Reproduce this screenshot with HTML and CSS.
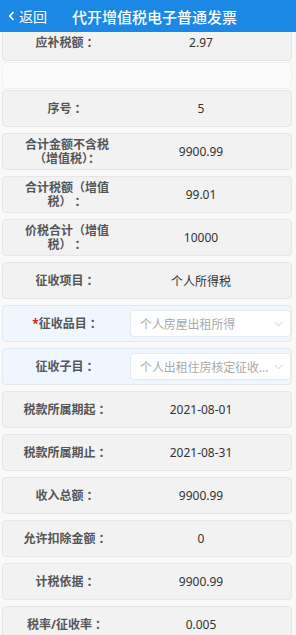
FILE: index.html
```html
<!DOCTYPE html>
<html lang="zh-CN">
<head>
  <meta charset="UTF-8">
  <meta name="viewport" content="width=device-width, initial-scale=1.0">
  <title>代开增值税电子普通发票</title>
  <link rel="stylesheet" href="styles.css">
</head>
<body>
  <div class="header">
    <div class="back">
      <svg class="back-icon" width="7" height="10" viewBox="0 0 7 10"><path d="M5.5 1 L1.8 5 L5.5 9" fill="none" stroke="#fff" stroke-width="1.8"/></svg>
      <span>返回</span>
    </div>
    <div class="title">代开增值税电子普通发票</div>
  </div>

  <div class="content">
    <div class="row first">
      <div class="label">应补税额 ：</div>
      <div class="value">2.97</div>
    </div>

    <div class="blank"></div>

    <div class="row">
      <div class="label">序号 ：</div>
      <div class="value">5</div>
    </div>
    <div class="row">
      <div class="label">合计金额不含税（增值税）：</div>
      <div class="value">9900.99</div>
    </div>
    <div class="row">
      <div class="label">合计税额（增值税） ：</div>
      <div class="value">99.01</div>
    </div>
    <div class="row">
      <div class="label">价税合计（增值税） ：</div>
      <div class="value">10000</div>
    </div>
    <div class="row">
      <div class="label">征收项目 ：</div>
      <div class="value">个人所得税</div>
    </div>

    <div class="row editable">
      <div class="label"><span class="required">*</span>征收品目 ：</div>
      <div class="value">
        <div class="select">
          <span class="select-text">个人房屋出租所得</span>
          <svg class="arrow" width="9" height="6" viewBox="0 0 9 6"><path d="M0.5 0.8 L4.5 4.8 L8.5 0.8" fill="none" stroke="#c8c8c8" stroke-width="0.9"/></svg>
        </div>
      </div>
    </div>
    <div class="row editable">
      <div class="label">征收子目 ：</div>
      <div class="value">
        <div class="select">
          <span class="select-text">个人出租住房核定征收...</span>
          <svg class="arrow" width="9" height="6" viewBox="0 0 9 6"><path d="M0.5 0.8 L4.5 4.8 L8.5 0.8" fill="none" stroke="#c8c8c8" stroke-width="0.9"/></svg>
        </div>
      </div>
    </div>

    <div class="row">
      <div class="label">税款所属期起 ：</div>
      <div class="value">2021-08-01</div>
    </div>
    <div class="row">
      <div class="label">税款所属期止 ：</div>
      <div class="value">2021-08-31</div>
    </div>
    <div class="row">
      <div class="label">收入总额 ：</div>
      <div class="value">9900.99</div>
    </div>
    <div class="row">
      <div class="label">允许扣除金额 ：</div>
      <div class="value">0</div>
    </div>
    <div class="row">
      <div class="label">计税依据 ：</div>
      <div class="value">9900.99</div>
    </div>
    <div class="row">
      <div class="label">税率/征收率 ：</div>
      <div class="value">0.005</div>
    </div>
  </div>
</body>
</html>
```

FILE: styles.css
```css
body {
  margin: 0;
  background-color: #f9f9f9;
  font-family: "Noto Sans", "Noto Sans CJK SC", sans-serif;
  font-size: 12px;
  color: #333;
}

.header {
  position: fixed;
  top: 0;
  left: 0;
  right: 0;
  height: 32px;
  background-color: #1c88e5;
  color: white;
  display: flex;
  align-items: center;
  z-index: 10;
}

.back {
  display: flex;
  align-items: center;
  padding-left: 8px;
  font-size: 14px;
}

.back-icon {
  margin-right: 4px;
}

.title {
  margin-left: 25px;
  font-size: 15px;
  font-weight: 500;
}

.content {
  padding-top: 24px;
}

.row {
  box-sizing: border-box;
  height: 37px;
  margin: 0 4px 6px 2px;
  background-color: #f2f2f2;
  border: 1px solid #e6e6e6;
  border-radius: 4px;
  display: flex;
  align-items: center;
}

.row.first {
  margin-bottom: 1px;
}

.row.editable {
  background-color: #eff6fd;
  border-color: #e3e9f0;
}

.blank {
  box-sizing: border-box;
  height: 27px;
  margin: 0 4px 1px 2px;
  background-color: #fbfbfb;
  border: 1px solid #f1f1f1;
  border-radius: 4px;
}

.label {
  width: 88px;
  margin-left: 20px;
  text-align: center;
  font-weight: bold;
  color: #555;
  line-height: 14px;
}

.required {
  color: #e02020;
}

.value {
  flex: 1;
  min-width: 0;
  text-align: center;
}

.select {
  box-sizing: border-box;
  height: 27px;
  margin-left: 19px;
  background-color: white;
  border: 1px solid #e6e9ee;
  border-radius: 4px;
  display: flex;
  align-items: center;
  padding-left: 9px;
  color: #aaa;
  text-align: left;
}

.select-text {
  flex: 1;
  min-width: 0;
  white-space: nowrap;
  letter-spacing: -0.1px;
}

.arrow {
  flex-shrink: 0;
  margin: 0 7px 0 0;
}
```
